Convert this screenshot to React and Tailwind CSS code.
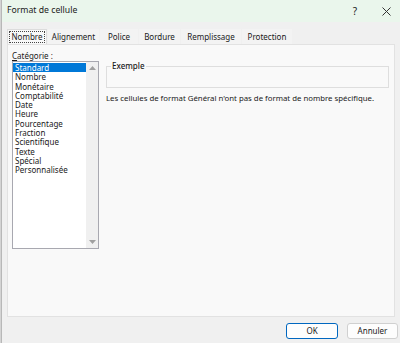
import React from 'react'

const categories = [
  'Standard',
  'Nombre',
  'Monétaire',
  'Comptabilité',
  'Date',
  'Heure',
  'Pourcentage',
  'Fraction',
  'Scientifique',
  'Texte',
  'Spécial',
  'Personnalisée',
]

const tabs = [
  { label: 'Nombre', w: 'w-[40px]' },
  { label: 'Alignement', w: 'w-[51px]' },
  { label: 'Police', w: 'w-[38px]' },
  { label: 'Bordure', w: 'w-[41px]' },
  { label: 'Remplissage', w: 'w-[60px]' },
  { label: 'Protection', w: 'w-[50px]' },
]

export default function App() {
  return (
    <div
      className="w-[400px] h-[343px] flex bg-[#f0f0f0] text-[#1a1a1a] overflow-hidden"
      style={{ fontFamily: '"Noto Sans", "Open Sans", sans-serif' }}
    >
      {/* bord de la fenêtre derrière */}
      <div className="w-[2px] shrink-0 bg-[#d4d4d4] border-r border-[#b8b8b8]" />

      <div className="flex-1 min-w-0 flex flex-col">
        {/* barre de titre */}
        <div className="h-[22px] shrink-0 bg-[#eaf6ec] flex items-center pl-[5px] pr-[9px] text-[8.7px]">
          <span className="flex-1">Format de cellule</span>
          <span className="text-[10px] mr-[25px]">?</span>
          <svg width="9" height="9" viewBox="0 0 9 9">
            <path d="M0.5 0.5 L8.5 8.5 M8.5 0.5 L0.5 8.5" stroke="#333" strokeWidth="1" />
          </svg>
        </div>

        {/* onglets */}
        <div className="flex items-end gap-[1px] pl-[5px] mt-[7px] h-[15px] text-[8px]">
          {tabs.map((t, i) => (
            <div
              key={t.label}
              className={`${t.w} h-[15px] flex items-center justify-center ${
                i === 0 ? 'bg-[#f9f9f9] border border-b-0 border-[#dcdcdc]' : 'bg-[#f3f3f3]'
              }`}
            >
              {i === 0 ? (
                <span className="px-[2px] leading-[10px] border border-dotted border-[#444]">{t.label}</span>
              ) : (
                t.label
              )}
            </div>
          ))}
        </div>

        {/* panneau */}
        <div className="mx-[5px] h-[273px] bg-[#f9f9f9] border border-[#e2e2e2] flex text-[8px]">
          <div className="w-[98px] shrink-0 pl-[4px] pt-[5px] flex flex-col">
            <div className="h-[11px] leading-[11px]">
              <span className="underline underline-offset-1">C</span>atégorie :
            </div>
            <div className="w-[87px] h-[188px] bg-white border border-[#a8a8b0] flex">
              <div className="flex-1 pt-px">
                {categories.map((c, i) => (
                  <div
                    key={c}
                    className={`h-[9.3px] leading-[9.3px] pl-[2px] ${
                      i === 0 ? 'bg-[#0078d7] text-white' : ''
                    }`}
                  >
                    {c}
                  </div>
                ))}
              </div>
              <div className="w-[12px] bg-[#f0f0f0] flex flex-col justify-between items-center py-[4px]">
                <svg width="7" height="4" viewBox="0 0 7 4">
                  <path d="M0 4 L3.5 0 L7 4 Z" fill="#a0a0a0" />
                </svg>
                <svg width="7" height="4" viewBox="0 0 7 4">
                  <path d="M0 0 L7 0 L3.5 4 Z" fill="#a0a0a0" />
                </svg>
              </div>
            </div>
          </div>

          <div className="flex-1 min-w-0 pt-[21px] pr-[5px]">
            <div className="h-[22px] border border-[#dedede] relative">
              <span className="absolute left-[4px] top-[-6px] bg-[#f9f9f9] px-px leading-[10px] font-medium">Exemple</span>
            </div>
            <div className="mt-[4px] leading-[12px] whitespace-nowrap text-[7.8px]">
              Les cellules de format Général n'ont pas de format de nombre spécifique.
            </div>
          </div>
        </div>

        {/* boutons */}
        <div className="flex justify-end gap-[9px] pr-[2px] mt-[6px] text-[8px]">
          <button className="w-[52px] h-[16px] bg-[#fdfdfd] border border-[#0067c0] rounded-[3px] leading-[14px]">
            OK
          </button>
          <button className="w-[51px] h-[16px] bg-[#fdfdfd] border border-[#d0d0d0] rounded-[3px] leading-[14px]">
            Annuler
          </button>
        </div>
      </div>
    </div>
  )
}
